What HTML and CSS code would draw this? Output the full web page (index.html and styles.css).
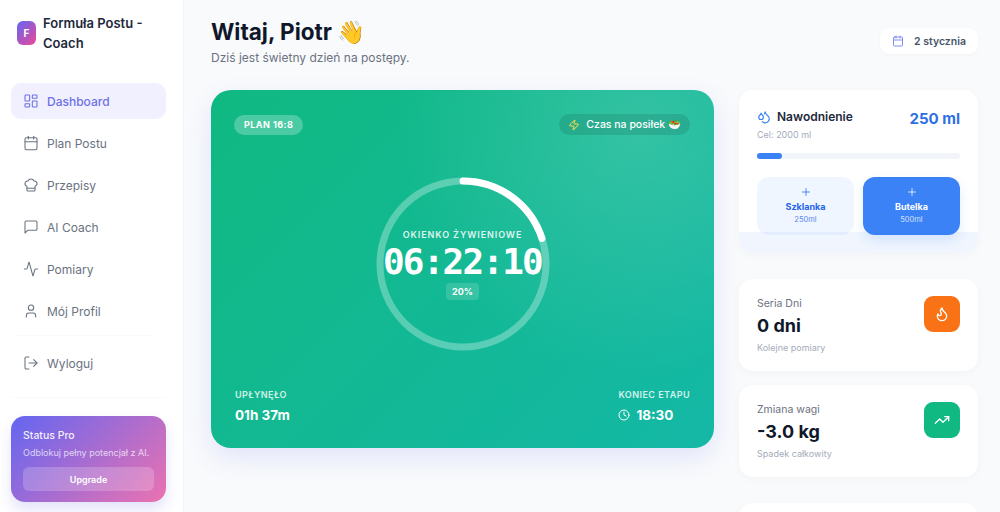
FILE: index.html
```html
<!DOCTYPE html>
<html lang="pl">

<head>
    <meta charset="UTF-8">
    <meta name="viewport" content="width=device-width, initial-scale=1.0">
    <title>Formuła Postu - Coach</title>
    <link rel="stylesheet" href="styles.css">
</head>

<body>
    <div class="app">
        <aside class="sidebar">
            <div class="brand">
                <div class="brand-logo">F</div>
                <div class="brand-name">Formuła Postu - Coach</div>
            </div>

            <nav class="nav">
                <a class="nav-item active">
                    <svg class="icon" viewBox="0 0 24 24"><rect width="7" height="9" x="3" y="3" rx="1"/><rect width="7" height="5" x="14" y="3" rx="1"/><rect width="7" height="9" x="14" y="12" rx="1"/><rect width="7" height="5" x="3" y="16" rx="1"/></svg>
                    Dashboard
                </a>
                <a class="nav-item">
                    <svg class="icon" viewBox="0 0 24 24"><path d="M8 2v4"/><path d="M16 2v4"/><rect width="18" height="18" x="3" y="4" rx="2"/><path d="M3 10h18"/></svg>
                    Plan Postu
                </a>
                <a class="nav-item">
                    <svg class="icon" viewBox="0 0 24 24"><path d="M17 21a1 1 0 0 0 1-1v-5.35c0-.457.316-.844.727-1.041a4 4 0 0 0-2.134-7.589 5 5 0 0 0-9.186 0 4 4 0 0 0-2.134 7.588c.411.198.727.585.727 1.041V20a1 1 0 0 0 1 1Z"/><path d="M6 17h12"/></svg>
                    Przepisy
                </a>
                <a class="nav-item">
                    <svg class="icon" viewBox="0 0 24 24"><path d="M21 15a2 2 0 0 1-2 2H7l-4 4V5a2 2 0 0 1 2-2h14a2 2 0 0 1 2 2z"/></svg>
                    AI Coach
                </a>
                <a class="nav-item">
                    <svg class="icon" viewBox="0 0 24 24"><path d="M22 12h-2.48a2 2 0 0 0-1.93 1.46l-2.35 8.36a.25.25 0 0 1-.48 0L9.24 2.18a.25.25 0 0 0-.48 0l-2.35 8.36A2 2 0 0 1 4.49 12H2"/></svg>
                    Pomiary
                </a>
                <a class="nav-item">
                    <svg class="icon" viewBox="0 0 24 24"><path d="M19 21v-2a4 4 0 0 0-4-4H9a4 4 0 0 0-4 4v2"/><circle cx="12" cy="7" r="4"/></svg>
                    Mój Profil
                </a>
                <div class="nav-line"></div>
                <a class="nav-item">
                    <svg class="icon" viewBox="0 0 24 24"><path d="M9 21H5a2 2 0 0 1-2-2V5a2 2 0 0 1 2-2h4"/><polyline points="16 17 21 12 16 7"/><line x1="21" x2="9" y1="12" y2="12"/></svg>
                    Wyloguj
                </a>
            </nav>

            <div class="side-bottom">
                <div class="promo">
                    <div class="promo-title">Status Pro</div>
                    <div class="promo-text">Odblokuj pełny potencjał z AI.</div>
                    <button class="promo-btn">Upgrade</button>
                </div>
            </div>
        </aside>

        <main class="main">
            <header class="top">
                <div>
                    <h1>Witaj, Piotr 👋</h1>
                    <p class="subtitle">Dziś jest świetny dzień na postępy.</p>
                </div>
                <div class="date-pill">
                    <svg class="icon date-icon" viewBox="0 0 24 24"><path d="M8 2v4"/><path d="M16 2v4"/><rect width="18" height="18" x="3" y="4" rx="2"/><path d="M3 10h18"/></svg>
                    2 stycznia
                </div>
            </header>

            <div class="grid">
                <section class="hero">
                    <div class="hero-row">
                        <span class="plan-pill">PLAN 16:8</span>
                        <span class="meal-pill">
                            <svg class="icon zap" viewBox="0 0 24 24"><path d="M4 14a1 1 0 0 1-.78-1.63l9.9-10.2a.5.5 0 0 1 .86.46l-1.92 6.02A1 1 0 0 0 13 10h7a1 1 0 0 1 .78 1.63l-9.9 10.2a.5.5 0 0 1-.86-.46l1.92-6.02A1 1 0 0 0 11 14z"/></svg>
                            Czas na posiłek 🥗
                        </span>
                    </div>

                    <div class="timer">
                        <svg class="ring" viewBox="0 0 176 176">
                            <circle class="ring-bg" cx="88" cy="88" r="83"/>
                            <circle class="ring-fg" cx="88" cy="88" r="83" pathLength="100" stroke-dasharray="20 100" transform="rotate(-90 88 88)"/>
                        </svg>
                        <div class="timer-inner">
                            <div class="timer-label">OKIENKO ŻYWIENIOWE</div>
                            <div class="timer-time">06:22:10</div>
                            <div class="timer-pct">20%</div>
                        </div>
                    </div>

                    <div class="hero-row hero-bottom">
                        <div>
                            <div class="hero-label">UPŁYNĘŁO</div>
                            <div class="hero-value">01h 37m</div>
                        </div>
                        <div>
                            <div class="hero-label">KONIEC ETAPU</div>
                            <div class="hero-value">
                                <svg class="icon clock" viewBox="0 0 24 24"><circle cx="12" cy="12" r="10"/><polyline points="12 6 12 12 16 14"/></svg>
                                18:30
                            </div>
                        </div>
                    </div>
                </section>

                <div class="side-col">
                    <section class="card water">
                        <div class="water-head">
                            <div>
                                <div class="water-title">
                                    <svg class="icon drop" viewBox="0 0 24 24"><path d="M7 16.3c2.2 0 4-1.83 4-4.05 0-1.16-.57-2.26-1.71-3.19S7.29 6.75 7 5.3c-.29 1.45-1.14 2.84-2.29 3.76S3 11.1 3 12.25c0 2.22 1.8 4.05 4 4.05z"/><path d="M12.56 6.6A10.97 10.97 0 0 0 14 3.02c.5 2.5 2 4.9 4 6.5s3 3.5 3 5.5a6.98 6.98 0 0 1-11.91 4.97"/></svg>
                                    Nawodnienie
                                </div>
                                <div class="water-goal">Cel: 2000 ml</div>
                            </div>
                            <div class="water-amount">250 ml</div>
                        </div>
                        <div class="bar"><div class="bar-fill" style="width: 12.5%"></div></div>
                        <div class="water-btns">
                            <button class="water-btn light">
                                <svg class="icon plus" viewBox="0 0 24 24"><path d="M5 12h14"/><path d="M12 5v14"/></svg>
                                <b>Szklanka</b>
                                <small>250ml</small>
                            </button>
                            <button class="water-btn solid">
                                <svg class="icon plus" viewBox="0 0 24 24"><path d="M5 12h14"/><path d="M12 5v14"/></svg>
                                <b>Butelka</b>
                                <small>500ml</small>
                            </button>
                        </div>
                        <div class="water-tint"></div>
                    </section>

                    <div class="stats">
                        <section class="card stat">
                            <div class="stat-text">
                                <div class="stat-label">Seria Dni</div>
                                <div class="stat-value">0 dni</div>
                                <div class="stat-note">Kolejne pomiary</div>
                            </div>
                            <div class="stat-icon orange">
                                <svg class="icon" viewBox="0 0 24 24"><path d="M8.5 14.5A2.5 2.5 0 0 0 11 12c0-1.38-.5-2-1-3-1.072-2.143-.224-4.054 2-6 .5 2.5 2 4.9 4 6.5 2 1.6 3 3.5 3 5.5a7 7 0 1 1-14 0c0-1.153.433-2.294 1-3a2.5 2.5 0 0 0 2.5 2.5z"/></svg>
                            </div>
                        </section>
                        <section class="card stat">
                            <div class="stat-text">
                                <div class="stat-label">Zmiana wagi</div>
                                <div class="stat-value">-3.0 kg</div>
                                <div class="stat-note">Spadek całkowity</div>
                            </div>
                            <div class="stat-icon green">
                                <svg class="icon" viewBox="0 0 24 24"><polyline points="22 7 13.5 15.5 8.5 10.5 2 17"/><polyline points="16 7 22 7 22 13"/></svg>
                            </div>
                        </section>
                    </div>

                    <section class="card stat"></section>
                </div>
            </div>
        </main>
    </div>
</body>

</html>
```

FILE: styles.css
```css
* {
    margin: 0;
    padding: 0;
    box-sizing: border-box;
}

html,
body {
    height: 512px;
    overflow: hidden;
}

body {
    background: #f8fafc;
    color: #0f172a;
    font-family: Inter, "Noto Sans", sans-serif;
}

button {
    border: none;
    font-family: inherit;
}

.icon {
    width: 16px;
    height: 16px;
    fill: none;
    stroke: currentColor;
    stroke-width: 2;
    stroke-linecap: round;
    stroke-linejoin: round;
    flex-shrink: 0;
}

.app {
    display: flex;
    height: 512px;
    overflow: hidden;
}

/* sidebar */
.sidebar {
    width: 184px;
    flex-shrink: 0;
    height: 512px;
    background: #fff;
    border-right: 1px solid #f1f5f9;
    padding: 12px 17px 0 11px;
}

.brand {
    display: flex;
    align-items: center;
    gap: 7px;
    padding-left: 6px;
    height: 42px;
}

.brand-logo {
    width: 19px;
    height: 24px;
    border-radius: 6px;
    background: linear-gradient(135deg, #6366f1, #ec4899);
    color: #fff;
    font-size: 10px;
    font-weight: 700;
    display: flex;
    align-items: center;
    justify-content: center;
    flex-shrink: 0;
}

.brand-name {
    font-size: 13px;
    font-weight: 600;
    line-height: 20px;
    color: #1e293b;
}

.nav {
    margin-top: 29px;
    display: flex;
    flex-direction: column;
    gap: 6px;
}

.nav-item {
    height: 36px;
    border-radius: 10px;
    display: flex;
    align-items: center;
    gap: 8px;
    padding-left: 12px;
    font-size: 12px;
    color: #6b7280;
}

.nav-item .icon {
    stroke-width: 1.6;
}

.nav-item.active {
    background: #f0f0fe;
    color: #6f70e6;
    font-weight: 500;
}

.nav-line {
    height: 1px;
    background: #f8fafc;
    margin: 0 12px 3px 4px;
}

.side-bottom {
    margin-top: 16px;
    border-top: 1px solid #f8fafc;
    padding-top: 18px;
}

.promo {
    height: 86px;
    border-radius: 14px;
    background: linear-gradient(135deg, #6366f1, #ec72b0);
    box-shadow: 0 8px 14px rgba(99, 102, 241, 0.18);
    padding: 13px 12px 0;
    color: #fff;
}

.promo-title {
    font-size: 10.5px;
    font-weight: 500;
    line-height: 14px;
    opacity: 0.9;
}

.promo-text {
    font-size: 9px;
    line-height: 11px;
    margin-top: 4px;
    opacity: 0.7;
    white-space: nowrap;
}

.promo-btn {
    width: 100%;
    height: 24px;
    margin-top: 9px;
    border-radius: 6px;
    background: rgba(255, 255, 255, 0.2);
    color: #fff;
    font-size: 9px;
    font-weight: 600;
}

/* main */
.main {
    flex: 1;
    padding: 16px 22px 0 27px;
    min-width: 0;
}

.top {
    display: flex;
    justify-content: space-between;
    align-items: center;
    height: 50px;
    margin-bottom: 24px;
}

h1 {
    font-size: 22.5px;
    font-weight: 700;
    line-height: 30px;
    color: #0f172a;
}

.subtitle {
    font-size: 12px;
    line-height: 16px;
    margin-top: 3px;
    color: #6b7280;
}

.date-pill {
    display: flex;
    align-items: center;
    gap: 10px;
    height: 26px;
    padding: 0 12px;
    background: #fff;
    border-radius: 9px;
    box-shadow: 0 1px 3px rgba(15, 23, 42, 0.04);
    font-size: 10.5px;
    font-weight: 600;
    color: #475569;
}

.date-icon {
    width: 12px;
    height: 12px;
    color: #818cf8;
}

.grid {
    display: grid;
    grid-template-columns: 503px 239px;
    gap: 25px;
    align-items: start;
}

/* hero */
.hero {
    height: 358px;
    border-radius: 20px;
    padding: 24px;
    color: #fff;
    display: flex;
    flex-direction: column;
    background:
        radial-gradient(circle at 85% 12%, rgba(255, 255, 255, 0.14), rgba(255, 255, 255, 0) 46%),
        linear-gradient(135deg, #10b981, #14b8a6);
    box-shadow: 0 10px 26px rgba(99, 102, 241, 0.14);
}

.hero-row {
    display: flex;
    justify-content: space-between;
    align-items: center;
}

.plan-pill {
    height: 20px;
    padding: 0 10px;
    margin-left: -1px;
    border-radius: 10px;
    background: rgba(255, 255, 255, 0.25);
    font-size: 9px;
    font-weight: 700;
    letter-spacing: 0.05em;
    display: flex;
    align-items: center;
}

.meal-pill {
    height: 21px;
    padding: 0 9px;
    border-radius: 11px;
    background: rgba(0, 0, 0, 0.1);
    font-size: 10.5px;
    font-weight: 500;
    display: flex;
    align-items: center;
    gap: 6px;
}

.zap {
    width: 12px;
    height: 12px;
    color: #fde047;
}

.timer {
    position: relative;
    width: 176px;
    height: 176px;
    margin: 41px auto 0;
}

.ring {
    width: 176px;
    height: 176px;
    display: block;
}

.ring-bg,
.ring-fg {
    fill: none;
    stroke-width: 7px;
}

.ring-bg {
    stroke: rgba(255, 255, 255, 0.3);
}

.ring-fg {
    stroke: #fff;
    stroke-linecap: round;
}

.timer-inner {
    position: absolute;
    inset: 0;
    display: flex;
    flex-direction: column;
    align-items: center;
    justify-content: center;
}

.timer-label {
    font-size: 9px;
    font-weight: 600;
    letter-spacing: 0.1em;
    line-height: 12px;
    margin-bottom: 1px;
    opacity: 0.85;
}

.timer-time {
    font-family: "DejaVu Sans Mono", monospace;
    font-size: 36px;
    font-weight: 700;
    letter-spacing: -0.05em;
    line-height: 40px;
}

.timer-pct {
    margin-top: 1px;
    height: 17px;
    padding: 0 6px;
    border-radius: 4px;
    background: rgba(255, 255, 255, 0.15);
    font-size: 9px;
    font-weight: 700;
    line-height: 17px;
}

.hero-bottom {
    margin-top: auto;
    align-items: flex-end;
}

.hero-label {
    font-size: 9px;
    font-weight: 600;
    letter-spacing: 0.05em;
    line-height: 12px;
    opacity: 0.8;
}

.hero-value {
    margin-top: 5px;
    font-size: 13.5px;
    font-weight: 700;
    line-height: 18px;
    display: flex;
    align-items: center;
    gap: 6px;
}

.clock {
    width: 12px;
    height: 12px;
}

/* right column */
.side-col {
    display: flex;
    flex-direction: column;
    gap: 26px;
}

.card {
    background: #fff;
    border-radius: 14px;
    box-shadow: 0 2px 8px rgba(15, 23, 42, 0.03);
}

.water {
    position: relative;
    height: 163px;
    padding: 19px 18px 0;
    overflow: hidden;
}

.water-head {
    display: flex;
    justify-content: space-between;
}

.water-title {
    display: flex;
    align-items: center;
    gap: 6px;
    font-size: 12px;
    font-weight: 600;
    line-height: 16px;
    color: #1e293b;
}

.drop {
    width: 14px;
    height: 14px;
    color: #3b82f6;
}

.water-goal {
    font-size: 9px;
    line-height: 12px;
    margin-top: 4px;
    color: #a3acb9;
}

.water-amount {
    font-size: 15px;
    font-weight: 700;
    line-height: 20px;
    color: #2f6fe4;
}

.bar {
    height: 6px;
    margin-top: 12px;
    border-radius: 3px;
    background: #f1f5f9;
}

.bar-fill {
    height: 100%;
    border-radius: 3px;
    background: #3b82f6;
}

.water-btns {
    display: grid;
    grid-template-columns: 1fr 1fr;
    gap: 9px;
    margin-top: 18px;
}

.water-btn {
    height: 58px;
    border-radius: 12px;
    display: flex;
    flex-direction: column;
    align-items: center;
    padding-top: 9px;
    font-size: 9px;
}

.water-btn b {
    font-weight: 700;
    line-height: 12px;
    margin-top: 3px;
}

.water-btn small {
    font-size: 7.5px;
    line-height: 11px;
    margin-top: 1px;
    opacity: 0.75;
}

.plus {
    width: 12px;
    height: 12px;
    stroke-width: 1.5;
}

.light {
    background: #eff6ff;
    color: #2563eb;
}

.solid {
    background: #3b82f6;
    color: #fff;
    box-shadow: 0 6px 12px rgba(59, 130, 246, 0.15);
}

.water-tint {
    position: absolute;
    left: 0;
    right: 0;
    bottom: 0;
    height: 21px;
    background: rgba(59, 130, 246, 0.07);
}

.stats {
    display: flex;
    flex-direction: column;
    gap: 14px;
}

.stat {
    height: 92px;
    padding: 17px 18px 0;
    display: flex;
    justify-content: space-between;
    align-items: flex-start;
}

.stat-text {
    padding-top: 1px;
}

.stat-label {
    font-size: 10.5px;
    line-height: 14px;
    color: #6b7280;
}

.stat-value {
    font-size: 18px;
    font-weight: 700;
    line-height: 24px;
    margin-top: 3px;
    color: #0f172a;
}

.stat-note {
    font-size: 9px;
    line-height: 12px;
    margin-top: 4px;
    color: #a3acb9;
}

.stat-icon {
    width: 36px;
    height: 36px;
    border-radius: 9px;
    color: #fff;
    display: flex;
    align-items: center;
    justify-content: center;
}

.orange {
    background: #f97316;
}

.green {
    background: #10b981;
}
```
